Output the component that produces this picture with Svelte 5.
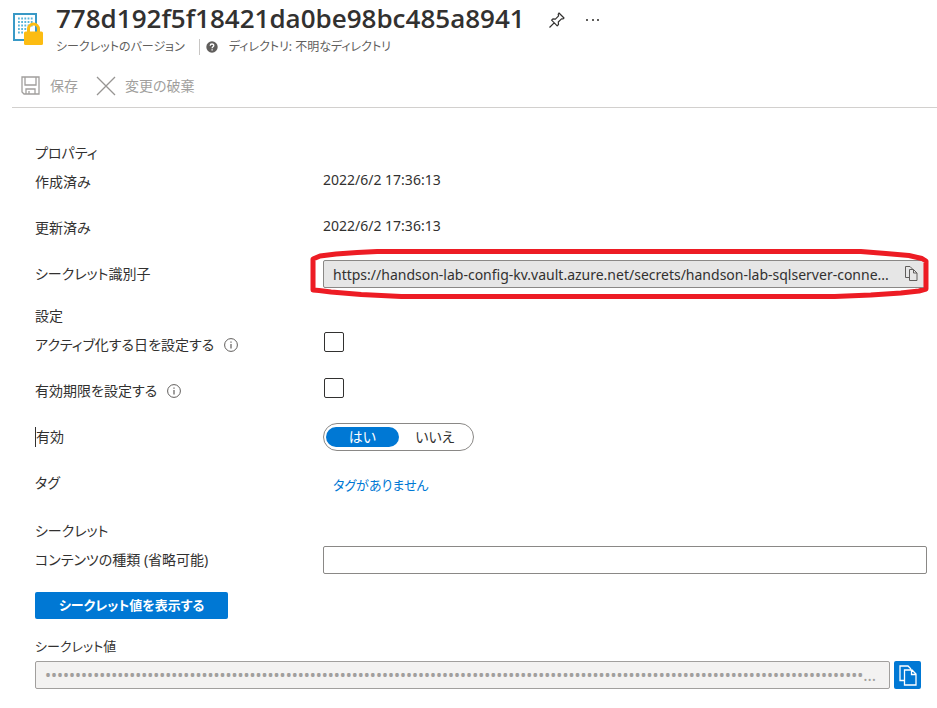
<script>
  const title = '778d192f5f18421da0be98bc485a8941';
  const identifier = 'https://handson-lab-config-kv.vault.azure.net/secrets/handson-lab-sqlserver-conne...';
  const masked = '•'.repeat(136) + '...';
  let activation = $state(false);
  let expiration = $state(false);
  let enabled = $state('yes');
  let contentType = $state('');
</script>

{#snippet info()}
  <svg class="info" viewBox="0 0 14 14" width="14" height="14" aria-hidden="true">
    <circle cx="7" cy="7" r="6.4" fill="none" stroke="#605e5c" />
    <path d="M7 6v4.5M7 3.5v1.3" stroke="#605e5c" stroke-width="1.2" />
  </svg>
{/snippet}

<main>
  <header>
    <svg class="logo" viewBox="0 0 31 34" width="31" height="34" aria-hidden="true">
      <rect x="1" y="2" width="22" height="26" fill="#fff" stroke="#3999c6" stroke-width="2" />
      <path d="M5 6.500h15M5 10h15M5 13.500h15M5 17h9M5 20.500h6" stroke="#59b4d9" stroke-width="1.800" stroke-dasharray="1.800 1.400" />
      <path d="M15.500 21v-4a5 5 0 0 1 10 0v4" fill="none" stroke="#fcbc12" stroke-width="3" />
      <rect x="11" y="19.500" width="19" height="13.500" rx="1.500" fill="#fcbc12" />
    </svg>
    <div class="heading">
      <div class="title-line">
        <h1>{title}</h1>
        <button class="plain" aria-label="ピン留め">
          <svg viewBox="0 0 18 18" width="18" height="18">
            <path d="M11 2l5 5-1.200 1-1.300-.2-3.200 3.200.2 2.500-1.300 1.300-5.600-5.600 1.300-1.300 2.500.2 3.200-3.200-.4-1.500zM6.400 11.600L1.500 16.500" fill="none" stroke="#323130" stroke-width="1.200" stroke-linejoin="round" />
          </svg>
        </button>
        <button class="plain" aria-label="その他">
          <svg viewBox="0 0 14 4" width="14" height="4" fill="#605e5c">
            <rect x="0" y="1" width="2" height="2" /><rect x="6" y="1" width="2" height="2" /><rect x="11" y="1" width="2" height="2" />
          </svg>
        </button>
      </div>
      <div class="subtitle">
        <span>シークレットのバージョン</span>
        <span class="directory">
          <svg viewBox="0 0 12 12" width="12" height="12" aria-hidden="true">
            <circle cx="6" cy="6" r="5.700" fill="#605e5c" />
            <path d="M4.200 4.700c0-2.300 3.600-2.200 3.600-.2 0 1.300-1.700 1.300-1.700 2.700M6.100 8.200v1.300" fill="none" stroke="#fff" stroke-width="1.300" />
          </svg>
          ディレクトリ: 不明なディレクトリ
        </span>
      </div>
    </div>
  </header>

  <div class="toolbar">
    <button disabled>
      <svg viewBox="0 0 20 20" width="20" height="20" fill="none" stroke="#a19f9d" stroke-width="1.300">
        <path d="M1 1h17v17H3l-2-2zM4 1v8h11V1M5 18v-5h9v5M8 18v-3" />
      </svg>
      保存
    </button>
    <button disabled>
      <svg viewBox="0 0 20 20" width="20" height="20" fill="none" stroke="#979593" stroke-width="1.300">
        <path d="M1 1l18 18M19 1L1 19" />
      </svg>
      変更の破棄
    </button>
  </div>

  <form onsubmit={(e) => e.preventDefault()}>
    <section>
      <h2>プロパティ</h2>
      <div class="row"><span>作成済み</span><span class="date">2022/6/2 17:36:13</span></div>
      <div class="row"><span>更新済み</span><span class="date">2022/6/2 17:36:13</span></div>
      <div class="row">
        <label for="identifier">シークレット識別子</label>
        <div class="field">
          <input id="identifier" class="readonly" type="text" readonly value={identifier} />
          <button class="copy" type="button" aria-label="コピー">
            <svg viewBox="0 0 13 15" width="13" height="15" fill="none" stroke="#605e5c">
              <path d="M4.500 11.500h-4v-11h4.500l2.500 2.500M4.500 3.500h4l3.500 3.500v7.500H4.500zM8.500 3.500v3.500H12" />
            </svg>
          </button>
          <svg class="marker" viewBox="0 0 620 50" preserveAspectRatio="none" aria-hidden="true">
            <path d="M4 41V10L11 7 27 5 48 3.500 68 2.500H550L575 4.500 598 6.500 611 9.500 615 12V40L608 42 590 44 560 46 524 47.500H92L52 45.500 22 43 10 41.500z" fill="none" stroke="#ed1c24" stroke-width="5" stroke-linejoin="round" />
          </svg>
        </div>
      </div>
    </section>

    <section class="settings">
      <h2>設定</h2>
      <div class="row">
        <label for="activation">アクティブ化する日を設定する {@render info()}</label>
        <input id="activation" type="checkbox" bind:checked={activation} />
      </div>
      <div class="row">
        <label for="expiration">有効期限を設定する {@render info()}</label>
        <input id="expiration" type="checkbox" bind:checked={expiration} />
      </div>
      <div class="row">
        <span id="enabled-label" class="focus">有効</span>
        <div class="toggle" role="radiogroup" aria-labelledby="enabled-label">
          <label><input type="radio" name="enabled" value="yes" bind:group={enabled} />はい</label>
          <label><input type="radio" name="enabled" value="no" bind:group={enabled} />いいえ</label>
        </div>
      </div>
      <div class="row"><span>タグ</span><a href="#tags">タグがありません</a></div>
    </section>

    <section class="secret">
      <h2>シークレット</h2>
      <div class="row">
        <label for="content-type">コンテンツの種類 (省略可能)</label>
        <input id="content-type" type="text" bind:value={contentType} />
      </div>
    </section>

    <button class="primary" type="button">シークレット値を表示する</button>

    <label class="value-label" for="secret-value">シークレット値</label>
    <div class="secret-line">
      <input id="secret-value" type="text" disabled value={masked} />
      <button class="copy-value" type="button" aria-label="シークレット値をコピー">
        <svg viewBox="0 0 18 21" width="18" height="21" fill="none" stroke="#fff" stroke-width="1.300">
          <path d="M5 15.500H1V1h8l3 3M5.500 5h7.500l4 4v11H5.500zM12.500 5v4.500H17" />
        </svg>
      </button>
    </div>
  </form>
</main>

<style>
  :global(body) { margin: 0; background: #fff; }
  main {
    font: 14px/20px "Noto Sans", "Noto Sans CJK JP", sans-serif;
    font-feature-settings: "palt";
    color: #323130;
    padding-bottom: 18px;
  }
  main * { box-sizing: border-box; }
  button, input { font: inherit; font-feature-settings: inherit; color: inherit; margin: 0; }
  button { border: 0; padding: 0; background: none; }
  svg { display: block; flex: none; }

  header { display: flex; gap: 12px; padding: 3px 13px 0; }
  .logo { margin-top: 9px; }
  .title-line { display: flex; align-items: center; height: 34px; }
  h1 { margin: 0 0 4px; font-family: "Open Sans", sans-serif; font-size: 26px; line-height: 30px; font-weight: 600; }
  .plain { display: flex; margin-left: 23px; }
  .plain + .plain { margin-left: 20px; }
  .subtitle { display: flex; gap: 14px; font-size: 12px; color: #605e5c; }
  .directory { display: flex; align-items: center; gap: 11px; }
  .directory::before { content: ""; width: 1px; height: 16px; margin-right: -5px; background: #c8c6c4; }

  .toolbar {
    display: flex;
    align-items: center;
    gap: 18px;
    height: 51px;
    margin-left: 12px;
    padding: 8px 9px 0;
    border-bottom: 1px solid #d2d0ce;
  }
  .toolbar button { display: flex; align-items: center; gap: 9px; height: 42px; color: #a19f9d; }

  form { padding: 35px 10px 0 35px; }
  section { display: grid; row-gap: 18px; }
  .settings { margin-top: 18px; }
  .secret { margin-top: 24px; }
  h2 { margin: 0 0 -13px; font-size: 14px; line-height: 20px; font-weight: 400; }
  .row { display: grid; grid-template-columns: 288px 1fr; align-items: center; min-height: 28px; }
  .row > label { display: flex; align-items: center; gap: 10px; }
  .date { padding-bottom: 4px; }
  .field { position: relative; display: flex; }
  input[type="text"] {
    width: 100%;
    min-width: 0;
    height: 28px;
    padding: 0 9px;
    border: 1px solid #8a8886;
    border-radius: 2px;
    background: #fff;
    outline: 0;
  }
  input.readonly { padding-right: 32px; background: #e6e6e6; }
  .copy { position: absolute; right: 9px; top: 6px; }
  .marker { position: absolute; left: -14px; top: -11px; width: calc(100% + 18px); height: 50px; pointer-events: none; }
  input[type="checkbox"] {
    appearance: none;
    align-self: start;
    width: 20px;
    height: 20px;
    margin: 1px;
    border: 1px solid #323130;
    border-radius: 2px;
  }
  input[type="checkbox"]:checked { background: #0078d4; }
  .focus { justify-self: start; border-left: 1px solid #323130; }
  .toggle { display: flex; width: 151px; height: 28px; padding: 3px 2px; border: 1px solid #8a8886; border-radius: 14px; }
  .toggle label { position: relative; flex: 1; border-radius: 10px; text-align: center; }
  .toggle input { position: absolute; opacity: 0; }
  .toggle label:has(:checked) { background: #0078d4; color: #fff; }
  a { padding: 4px 0 0 10px; font-size: 13px; color: #0078d4; text-decoration: none; }
  .primary {
    display: block;
    height: 27px;
    margin-top: 18px;
    padding: 0 24px 2px;
    border-radius: 2px;
    background: #0078d4;
    color: #fff;
    font-size: 13px;
    font-weight: 600;
  }
  .value-label { display: block; margin: 17px 0 5px; font-size: 13px; }
  .secret-line { display: flex; gap: 4px; padding-right: 6px; }
  .secret-line input[type="text"] { flex: 1; background: #f3f2f1; border-color: #a19f9d; color: #a19f9d; font-size: 16px; }
  .copy-value { display: grid; place-items: center; width: 27px; height: 28px; border-radius: 2px; background: #0078d4; }
</style>
